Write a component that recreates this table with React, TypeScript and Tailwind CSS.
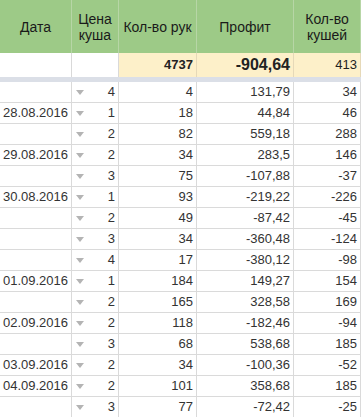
import React from 'react';

type Row = [string, string, string, string, string];

const rows: Row[] = [
  ['', '4', '4', '131,79', '34'],
  ['28.08.2016', '1', '18', '44,84', '46'],
  ['', '2', '82', '559,18', '288'],
  ['29.08.2016', '2', '34', '283,5', '146'],
  ['', '3', '75', '-107,88', '-37'],
  ['30.08.2016', '1', '93', '-219,22', '-226'],
  ['', '2', '49', '-87,42', '-45'],
  ['', '3', '34', '-360,48', '-124'],
  ['', '4', '17', '-380,12', '-98'],
  ['01.09.2016', '1', '184', '149,27', '154'],
  ['', '2', '165', '328,58', '169'],
  ['02.09.2016', '2', '118', '-182,46', '-94'],
  ['', '3', '68', '538,68', '185'],
  ['03.09.2016', '2', '34', '-100,36', '-52'],
  ['04.09.2016', '2', '101', '358,68', '185'],
  ['', '3', '77', '-72,42', '-25'],
];

const Caret = () => (
  <svg width="8" height="5" viewBox="0 0 8 5" className="shrink-0">
    <path d="M0 0 H8 L4 5 Z" fill="#b4b4b4" />
  </svg>
);

export default function App() {
  return (
    <div
      className="w-[361px] h-[417px] overflow-hidden bg-white text-[13px] text-[#222]"
      style={{ fontFamily: '"Liberation Sans", Arial, sans-serif' }}
    >
      {/* header */}
      <div className="flex h-[53px] bg-[#9dca87] text-[14px] leading-[16px] text-[#1a1a1a]">
        <div className="w-[72px] border-r border-[#b7d6a6] flex items-center justify-center">Дата</div>
        <div className="w-[47px] border-r border-[#b7d6a6] flex items-center justify-center text-center">
          Цена
          <br />
          куша
        </div>
        <div className="w-[78px] border-r border-[#b7d6a6] flex items-center justify-center">Кол-во рук</div>
        <div className="w-[97px] border-r border-[#b7d6a6] flex items-center justify-center">Профит</div>
        <div className="w-[67px] border-r border-[#b7d6a6] flex items-center justify-center text-center">
          Кол-во
          <br />
          кушей
        </div>
      </div>

      {/* totals */}
      <div className="flex h-[24px] items-stretch">
        <div className="w-[72px] border-r border-[#d9d9d9]" />
        <div className="w-[47px] border-r border-[#d9d9d9]" />
        <div className="w-[78px] border-r border-[#e6d9b8] bg-[#fdf0c9] flex items-center justify-end pr-[3px] font-bold">
          4737
        </div>
        <div className="w-[97px] border-r border-[#e6d9b8] bg-[#fdf0c9] flex items-center justify-end pr-[3px] font-bold text-[16px]">
          -904,64
        </div>
        <div className="w-[67px] border-r border-[#e6d9b8] bg-[#fdf0c9] flex items-center justify-end pr-[3px]">
          413
        </div>
      </div>

      {/* frozen row separator */}
      <div className="h-[5px] bg-[#dbdfe7]" />

      {rows.map((r, i) => (
        <div key={i} className="flex h-[21px] border-b border-[#dadada] text-[#333]">
          <div className="w-[72px] border-r border-[#dadada] flex items-center justify-end pr-[3px]">{r[0]}</div>
          <div className="w-[47px] border-r border-[#dadada] flex items-center justify-between pl-[4px] pr-[3px]">
            <Caret />
            <span>{r[1]}</span>
          </div>
          <div className="w-[78px] border-r border-[#dadada] flex items-center justify-end pr-[3px]">{r[2]}</div>
          <div className="w-[97px] border-r border-[#dadada] flex items-center justify-end pr-[3px]">{r[3]}</div>
          <div className="w-[67px] border-r border-[#dadada] flex items-center justify-end pr-[3px]">{r[4]}</div>
        </div>
      ))}
    </div>
  );
}
